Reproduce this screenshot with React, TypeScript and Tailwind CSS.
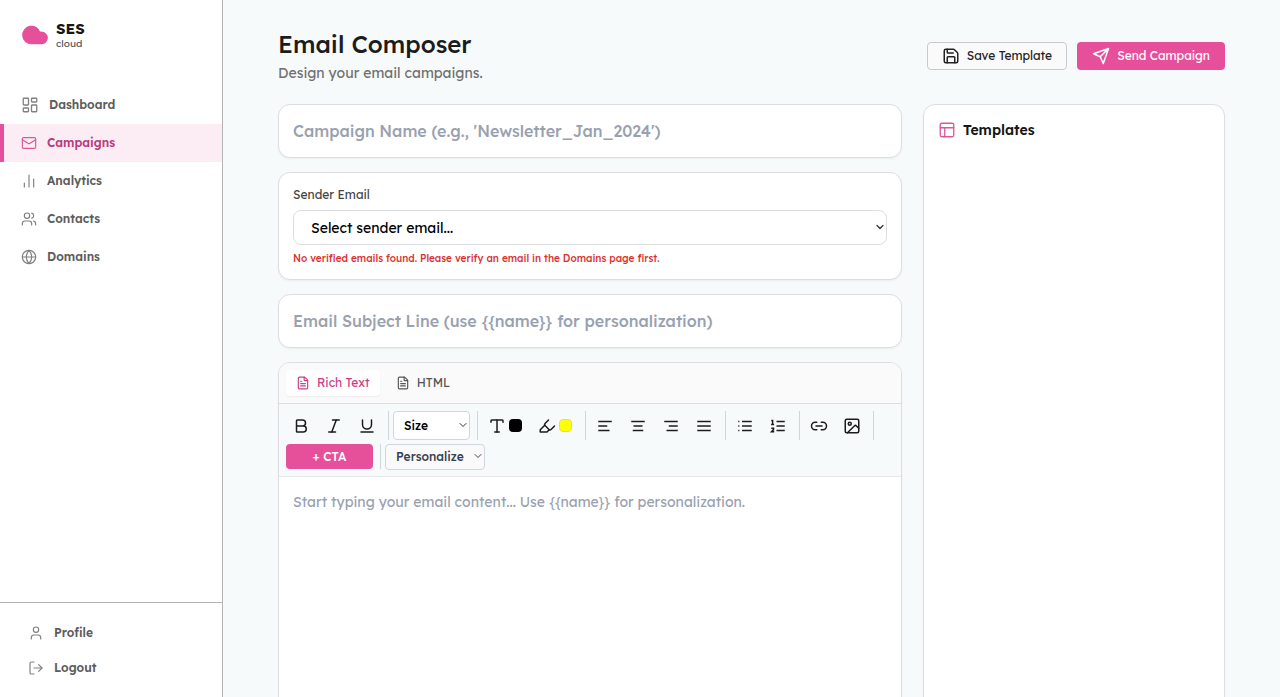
import { useState } from "react";
import type { ReactNode } from "react";
import {
    Bold,
    ChartNoAxesColumn,
    ChevronDown,
    Cloud,
    FileText,
    Globe,
    Highlighter,
    Image,
    Italic,
    LayoutDashboard,
    Link2,
    LogOut,
    Mail,
    PanelsTopLeft,
    Save,
    Type,
    Underline,
    User,
    Users,
} from "lucide-react";

const navItems = [
    { label: "Dashboard", icon: LayoutDashboard, size: 18 },
    { label: "Campaigns", icon: Mail, size: 16 },
    { label: "Analytics", icon: ChartNoAxesColumn, size: 16 },
    { label: "Contacts", icon: Users, size: 16 },
    { label: "Domains", icon: Globe, size: 16 },
];

const accountItems = [
    { label: "Profile", icon: User },
    { label: "Logout", icon: LogOut },
];

const alignments = [
    { label: "Align left", d: "M3 6h18M3 12h12M3 18h15" },
    { label: "Align center", d: "M3 6h18M6 12h12M5 18h14" },
    { label: "Align right", d: "M3 6h18M9 12h12M6 18h15" },
    { label: "Justify", d: "M3 6h18M3 12h18M3 18h18" },
];

const fieldClass =
    "h-[54px] w-full rounded-xl border border-[#dcdee1] bg-white px-3.5 text-base font-medium text-[#1c1c1c] shadow-xs outline-none placeholder:text-gray-400";

function LineIcon({ d, children }: { d: string; children?: ReactNode }) {
    return (
        <svg viewBox="0 0 24 24" className="size-[18px]" fill="none" stroke="currentColor" strokeWidth={2.2}>
            <path d={d} />
            {children}
        </svg>
    );
}

function PlaneIcon() {
    return (
        <svg viewBox="0 0 24 24" className="size-[18px]" fill="none" stroke="currentColor" strokeWidth={2} strokeLinecap="round" strokeLinejoin="round">
            <path d="M22 2 15 22l-4-9-9-4ZM22 2 11 13" />
        </svg>
    );
}

function ToolButton({ label, children }: { label: string; children: ReactNode }) {
    return (
        <button type="button" aria-label={label} title={label} className="flex h-[29px] w-[29px] items-center justify-center rounded text-[#1c1c1c]">
            {children}
        </button>
    );
}

// one block of tools with the thin line on its right
function ToolGroup({ children }: { children: ReactNode }) {
    return <div className="flex items-center gap-1 border-r border-gray-300 pr-[7px]">{children}</div>;
}

function Toolbar() {
    return (
        <div className="flex flex-wrap items-center gap-x-1 gap-y-[3px] border-b border-gray-200 bg-[#f7fafb] px-[7px] pt-[7px] pb-1.5">
            <ToolGroup>
                <ToolButton label="Bold"><Bold size={18} /></ToolButton>
                <ToolButton label="Italic"><Italic size={18} /></ToolButton>
                <ToolButton label="Underline"><Underline size={18} /></ToolButton>
            </ToolGroup>
            <ToolGroup>
                <div className="relative">
                    <select aria-label="Font size" className="h-[29px] w-[77px] appearance-none rounded border border-gray-300 bg-white pl-2.5 text-xs font-medium text-black">
                        <option>Size</option>
                    </select>
                    <ChevronDown size={12} className="pointer-events-none absolute top-2 right-px text-[#333]" />
                </div>
            </ToolGroup>
            <ToolGroup>
                {/* text color */}
                <button type="button" aria-label="Text color" className="flex h-[29px] w-[46px] items-center justify-center gap-[3px] text-[#1c1c1c]">
                    <Type size={18} />
                    <span className="size-[13px] rounded-sm bg-black" />
                </button>
                {/* highlight color */}
                <button type="button" aria-label="Highlight color" className="flex h-[29px] w-[46px] items-center justify-center gap-[3px] text-[#1c1c1c]">
                    <Highlighter size={18} />
                    <span className="size-[13px] rounded-sm border border-[#e2e24a] bg-[#ffff00]" />
                </button>
            </ToolGroup>
            <ToolGroup>
                {alignments.map((item) => (
                    <ToolButton key={item.label} label={item.label}>
                        <LineIcon d={item.d} />
                    </ToolButton>
                ))}
            </ToolGroup>
            <ToolGroup>
                <ToolButton label="Bullet list">
                    <LineIcon d="M8 6h13M8 12h13M8 18h13M3 6h1.5M3 12h1.5M3 18h1.5" />
                </ToolButton>
                <ToolButton label="Numbered list">
                    <LineIcon d="M10 6h11M10 12h11M10 18h11">
                        <path d="M3 4.5h1.8V10M2.8 10h4M3 15h3v1.8L3.4 19.6H7" strokeWidth={2} />
                    </LineIcon>
                </ToolButton>
            </ToolGroup>
            <ToolGroup>
                <ToolButton label="Link"><Link2 size={18} /></ToolButton>
                <ToolButton label="Image"><Image size={18} /></ToolButton>
            </ToolGroup>
            <ToolGroup>
                <button type="button" className="h-[25px] w-[87px] rounded bg-[#e6509b] text-xs font-medium text-white">
                    + CTA
                </button>
            </ToolGroup>
            <div className="relative">
                <select aria-label="Personalize" className="h-[26px] w-[100px] appearance-none rounded border border-gray-300 bg-[#fafafa] pl-2.5 text-xs font-medium text-gray-700">
                    <option>Personalize</option>
                </select>
                <ChevronDown size={12} className="pointer-events-none absolute top-[7px] right-px text-[#444]" />
            </div>
        </div>
    );
}

function Sidebar() {
    return (
        <aside className="sticky top-0 flex h-screen w-[223px] shrink-0 flex-col border-r border-[#b5b5b5] bg-white">
            <div className="flex items-center gap-[7px] px-[21px] pt-5">
                <Cloud size={28} className="fill-[#e6509b] text-[#e6509b]" />
                <div>
                    <p className="text-[15px] leading-[18px] font-bold text-[#171717]">SES</p>
                    <p className="text-[10px] leading-3 text-[#555]">cloud</p>
                </div>
            </div>
            <nav className="mt-9 flex flex-col">
                {navItems.map(({ label, icon: Icon, size }) => (
                    <a
                        key={label}
                        href="#"
                        className={`flex h-[38px] items-center gap-2.5 border-l-4 pl-[17px] text-xs font-semibold ${label === "Campaigns" ? "border-[#e6509b] bg-[#fcecf4] text-[#b83c7c]" : "border-transparent text-[#5c5c5c]"}`}
                    >
                        <Icon size={size} strokeWidth={1.75} className={label === "Campaigns" ? "text-[#dc5898]" : "text-[#808080]"} />
                        {label}
                    </a>
                ))}
            </nav>
            <div className="mt-auto flex flex-col border-t border-[#b5b5b5] px-7 py-3">
                {accountItems.map(({ label, icon: Icon }) => (
                    <a key={label} href="#" className="flex h-[35px] items-center gap-2.5 text-xs font-semibold text-[#5c5c5c]">
                        <Icon size={16} strokeWidth={1.75} className="text-[#808080]" />
                        {label}
                    </a>
                ))}
            </div>
        </aside>
    );
}

export default function App() {
    const [tab, setTab] = useState("Rich Text");

    return (
        <div className="flex min-h-screen bg-[#f7fafb] font-['Lexend','Inter',sans-serif]">
            <Sidebar />
            <main className="min-w-0 flex-1 px-[55px] pt-[27px]">
                <header className="flex items-center justify-between">
                    <div>
                        <h1 className="text-2xl leading-[34px] font-medium text-[#1c1c1c]">Email Composer</h1>
                        <p className="text-sm leading-6 text-[#707070]">Design your email campaigns.</p>
                    </div>
                    <div className="flex gap-2.5">
                        <button type="button" className="flex h-7 items-center gap-[7px] rounded border border-[#c8cacd] bg-[#fafafa] px-3.5 text-xs text-[#222]">
                            <Save size={18} />
                            Save Template
                        </button>
                        <button type="button" className="flex h-7 items-center gap-[7px] rounded bg-[#e6509b] px-[15px] text-xs text-white">
                            <PlaneIcon />
                            Send Campaign
                        </button>
                    </div>
                </header>
                <div className="mt-[19px] flex gap-[21px]">
                    <div className="flex min-w-0 flex-1 flex-col gap-3.5">
                        <input type="text" aria-label="Campaign name" placeholder="Campaign Name (e.g., 'Newsletter_Jan_2024')" className={fieldClass} />
                        {/* sender */}
                        <section className="rounded-xl border border-[#dcdee1] bg-white px-3.5 py-3 shadow-xs">
                            <label htmlFor="sender" className="block text-xs leading-5 text-[#444]">Sender Email</label>
                            <div className="relative mt-[5px]">
                                <select id="sender" className="h-[35px] w-full appearance-none rounded-lg border border-[#dcdee1] bg-white pl-[17px] text-sm text-black">
                                    <option>Select sender email...</option>
                                </select>
                                <ChevronDown size={12} strokeWidth={2.5} className="pointer-events-none absolute top-[11px] right-px text-[#333]" />
                            </div>
                            <p className="mt-1.5 text-[10px] leading-4 font-medium text-[#dc2f2f]">No verified emails found. Please verify an email in the Domains page first.</p>
                        </section>
                        <input type="text" aria-label="Email subject" placeholder="Email Subject Line (use {{name}} for personalization)" className={fieldClass} />
                        {/* editor */}
                        <section className="overflow-hidden rounded-xl border border-[#dcdee1] bg-white shadow-xs">
                            <div className="flex h-[41px] items-center gap-1.5 border-b border-[#dcdee1] bg-[#fafafa] px-[7px]">
                                {["Rich Text", "HTML"].map((name) => (
                                    <button
                                        key={name}
                                        type="button"
                                        onClick={() => setTab(name)}
                                        className={`flex h-[26px] items-center gap-[7px] rounded px-2.5 text-xs ${tab === name ? "bg-white text-[#c93c86] shadow-xs" : "text-[#555]"}`}
                                    >
                                        <FileText size={14} />
                                        {name}
                                    </button>
                                ))}
                            </div>
                            <Toolbar />
                            <textarea
                                aria-label="Email content"
                                placeholder="Start typing your email content... Use {{name}} for personalization."
                                className="block h-[400px] w-full resize-none px-3.5 py-[15px] text-sm outline-none placeholder:text-gray-400"
                            />
                        </section>
                    </div>
                    {/* templates */}
                    <aside className="w-[302px] shrink-0 rounded-xl border border-[#dcdee1] bg-white px-3.5 py-[15px] shadow-xs">
                        <h2 className="flex items-center gap-[7px] text-sm leading-5 font-semibold text-[#171717]">
                            <PanelsTopLeft size={18} strokeWidth={1.75} className="text-[#dc5898]" />
                            Templates
                        </h2>
                    </aside>
                </div>
            </main>
        </div>
    );
}
